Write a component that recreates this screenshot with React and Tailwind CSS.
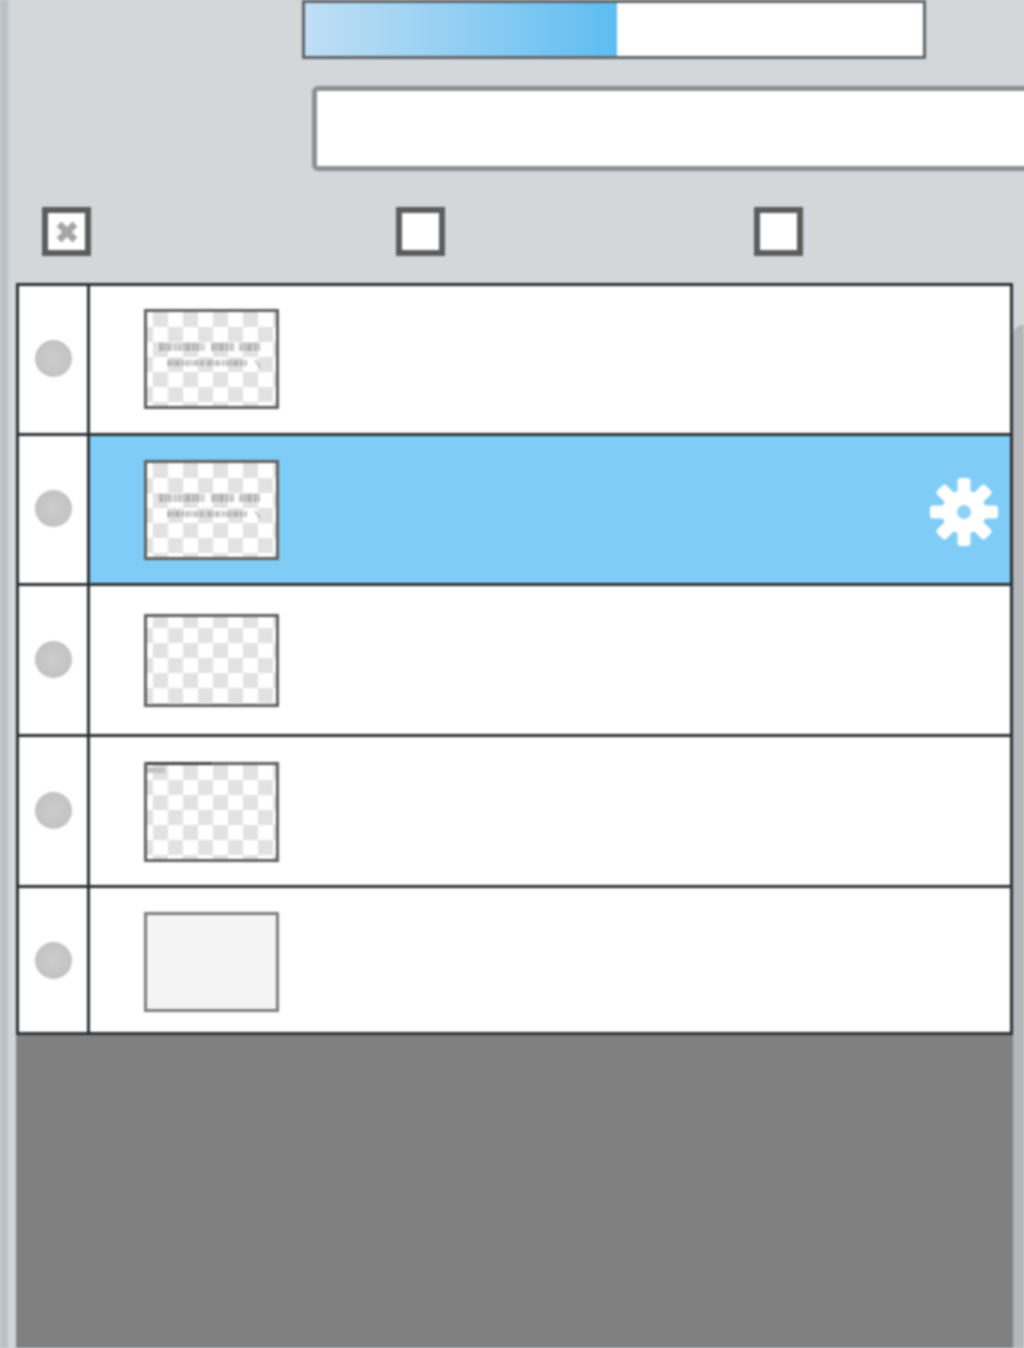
import React from 'react';

const filas = [
    { id: 1, alto: 'h-[150px]', radio: 'pb-[3px]', tipo: 'texto', thumb: 'mt-[23px] h-[100px]', fondoPos: 'bg-[position:6px_0px]' },
    { id: 2, alto: 'h-[150px]', radio: 'pb-[3px]', activa: true, tipo: 'texto', thumb: 'mt-[24px] h-[100px]', fondoPos: 'bg-[position:6px_0px]' },
    { id: 3, alto: 'h-[151px]', radio: 'pb-[2px]', tipo: 'vacio', thumb: 'mt-[28px] h-[93px]', fondoPos: 'bg-[position:6px_-4px]' },
    { id: 4, alto: 'h-[151px]', radio: 'pb-[2px]', tipo: 'marca', thumb: 'mt-[25px] h-[100px]', fondoPos: 'bg-[position:6px_0px]' },
    { id: 5, alto: 'h-[147px]', radio: 'pb-0', tipo: 'blanco', thumb: 'mt-[24px] h-[100px]' },
];

// garabato del texto que se ve en la miniatura, no se alcanza a leer
function TextoMiniatura() {
    return (
        <svg viewBox="0 0 129 94" className="w-full h-full" fill="none" stroke="#6f6f6f" strokeDasharray="4 1 2 1 5 1.5 3 1">
            <path d="M12 35 H58 M64 35 H88 M92 35 H113" strokeWidth="8" opacity="0.42" />
            <path d="M20 51 H58 M60 51 H100" strokeWidth="6" opacity="0.42" />
            <path d="M108 48 L113 55" strokeWidth="2" strokeDasharray="none" opacity="0.4" />
        </svg>
    );
}

function Miniatura({ fila }) {
    if (fila.tipo === 'blanco') {
        return <div className={`${fila.thumb} ml-[54px] w-[135px] border-[3px] border-[#7c7c7c] bg-[#f4f4f4]`} />;
    }
    return (
        <div className={`${fila.thumb} ${fila.fondoPos} ml-[54px] w-[135px] border-[3px] border-[#5f5f5f] bg-[length:30px_30px] bg-[image:conic-gradient(#ffffff_25%,#e2e2e2_0_50%,#ffffff_0_75%,#e2e2e2_0)] relative`}>
            {fila.tipo === 'texto' && <TextoMiniatura />}
            {fila.tipo === 'marca' && <div className="absolute left-0 top-[2px] w-[18px] h-[6px] bg-[#c4c4c4]" />}
            {fila.tipo === 'marca' && <div className="absolute left-0 -top-[3px] w-[65px] h-[3px] bg-[#3f3f3f]" />}
        </div>
    );
}

function Engrane() {
    const dientes = [0, 45, 90, 135];
    return (
        <svg viewBox="0 0 70 70" className="w-[70px] h-[70px] mr-[11px] mt-[5px]">
            {dientes.map((d) => (
                <rect key={d} x="28.5" y="1" width="13" height="68" rx="3" fill="#ffffff" transform={`rotate(${d} 35 35)`} />
            ))}
            <circle cx="35" cy="35" r="22" fill="#ffffff" />
            <circle cx="35" cy="35" r="7" fill="#8fd3f7" />
        </svg>
    );
}

function Check({ marcado, className }) {
    return (
        <div className={`w-[49px] h-[49px] border-[6px] border-[#5c5c5c] bg-white flex items-center justify-center ${className}`}>
            {marcado && (
                <svg viewBox="0 0 24 24" className="w-[24px] h-[24px]" stroke="#a5a5a5" strokeWidth="7">
                    <path d="M4 4 L20 20 M20 4 L4 20" />
                </svg>
            )}
        </div>
    );
}

export default function App() {
    return (
        <div className="w-[1024px] h-[1348px] overflow-hidden bg-[#d3d7da]">
            <div className="w-[1024px] h-[1348px] flex blur-[1px]">
                <div className="w-2 shrink-0 bg-[#b9c1c6]" />

                <div className="w-[1016px] shrink-0 flex flex-col">
                    {/* SLIDER */}
                    <div className="ml-[294px] w-[624px] h-[59px] shrink-0 border-[3px] border-[#5f6468] bg-white flex">
                        <div className="w-[312px] h-full bg-gradient-to-r from-[#bfdff4] to-[#5cbdf1]" />
                    </div>

                    {/* CAMPO DE TEXTO */}
                    <div className="ml-[304px] mt-[27px] w-[730px] h-[85px] shrink-0 rounded-[6px] border-[5px] border-[#8d8f91] bg-white" />

                    {/* CHECKS */}
                    <div className="flex mt-[36px] shrink-0">
                        <Check marcado className="ml-[34px]" />
                        <Check className="ml-[305px]" />
                        <Check className="ml-[309px]" />
                    </div>

                    <div className="flex flex-1 mt-[27px] min-h-0">
                        {/* LISTA DE CAPAS */}
                        <div className="ml-[8px] w-[997px] shrink-0 flex flex-col bg-[#808080]">
                            <div className="border-[3px] border-b-0 border-[#2c2f32] bg-white">
                                {filas.map((fila) => (
                                    <div key={fila.id} className={`${fila.alto} flex border-b-[3px] border-[#2c2f32]`}>
                                        <div className={`${fila.radio} w-[71px] shrink-0 bg-white border-r-[3px] border-[#2c2f32] flex items-center justify-center`}>
                                            <div className="w-[37px] h-[37px] rounded-full bg-[radial-gradient(circle,#cdcdcd_0%,#c4c4c4_60%,#b9b9b9_100%)]" />
                                        </div>
                                        <div className={`flex-1 flex justify-between ${fila.activa ? 'bg-[#7fcdf6]' : 'bg-white'}`}>
                                            <Miniatura fila={fila} />
                                            {fila.activa && <div className="self-center"><Engrane /></div>}
                                        </div>
                                    </div>
                                ))}
                            </div>
                        </div>

                        {/* BORDE DEL PANEL VECINO */}
                        <div className="flex-1 mt-[42px] rounded-tl-[10px] bg-[#b4b6ba]" />
                    </div>
                </div>
            </div>
        </div>
    );
}
